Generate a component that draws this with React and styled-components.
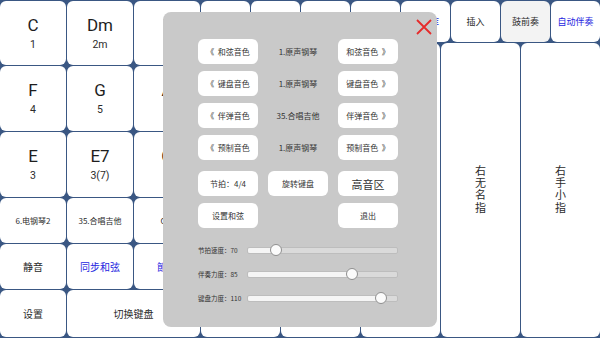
import React from "react";
import styled, { createGlobalStyle } from "styled-components";

const Global = createGlobalStyle`
  html, body { margin: 0; padding: 0; background: #ffffff; }
  body { font-family: Roboto, "Noto Sans CJK SC", sans-serif; overflow: hidden; }
`;

const Board = styled.div`
  position: relative;
  width: 600px;
  height: 338px;
  box-sizing: border-box;
  padding: 1px 0 1px 0;
  display: grid;
  grid-template-columns: 200px 1fr;
  gap: 1px;
  background: #3a5783;
`;

const LeftGrid = styled.div`
  display: grid;
  grid-template-columns: repeat(3, 66px);
  grid-template-rows: 64px 65px 65px 45px 45px 1fr;
  gap: 1px;
`;

const RightArea = styled.div`
  display: grid;
  grid-template-rows: 41px 1fr;
  gap: 1px;
`;

const TopRow = styled.div`
  display: grid;
  grid-template-columns: repeat(8, 1fr);
  gap: 1px;
`;

const FingerRow = styled.div`
  display: grid;
  grid-template-columns: repeat(5, 1fr);
  gap: 1px;
`;

const Cell = styled.div`
  background: ${(p) => p.$bg || "#ffffff"};
  color: ${(p) => p.$color || "#2b2b2b"};
  border-radius: 6px;
  display: flex;
  flex-direction: column;
  align-items: center;
  justify-content: center;
  font-family: "Noto Sans CJK SC", sans-serif;
  font-size: ${(p) => p.$size || 10}px;
  grid-column: span ${(p) => p.$span || 1};
  min-width: 0;
  overflow: hidden;
  white-space: nowrap;
`;

const ChordName = styled.div`
  font-family: Roboto, "Noto Sans CJK SC", sans-serif;
  font-size: 17px;
  line-height: 20px;
  color: #1e1e1e;
`;

const ChordDegree = styled.div`
  font-family: Roboto, sans-serif;
  font-size: 10.5px;
  line-height: 14px;
  margin-top: 3px;
  color: #2b2b2b;
`;

const VerticalLabel = styled.div`
  writing-mode: vertical-rl;
  font-family: "Noto Sans CJK SC", sans-serif;
  font-size: 11px;
  letter-spacing: 1.3px;
  color: #2b2b2b;
`;

const Dialog = styled.div`
  position: absolute;
  left: 163px;
  top: 12px;
  width: 274px;
  height: 315px;
  box-sizing: border-box;
  background: #c9c9c9;
  border-radius: 8px;
  padding: 27px 0 0 35px;
  display: flex;
  flex-direction: column;
`;

const CloseButton = styled.div`
  position: absolute;
  right: 4px;
  top: 6px;
  width: 18px;
  height: 18px;
`;

const ButtonGrid = styled.div`
  display: grid;
  grid-template-columns: repeat(3, 60px);
  grid-auto-rows: 25px;
  column-gap: 10px;
  row-gap: 7px;
  margin-top: ${(p) => p.$offset || 0}px;
`;

const PanelButton = styled.div`
  background: #ffffff;
  border-radius: 6px;
  display: flex;
  align-items: center;
  justify-content: center;
  font-family: "Noto Sans CJK SC", sans-serif;
  font-size: ${(p) => p.$size || 8}px;
  color: #333333;
  white-space: nowrap;
  grid-column: ${(p) => p.$col || "auto"};
`;

const PanelLabel = styled.div`
  display: flex;
  align-items: center;
  justify-content: center;
  font-family: "Noto Sans CJK SC", sans-serif;
  font-size: 8px;
  color: #333333;
  white-space: nowrap;
`;

const Sliders = styled.div`
  margin-top: 17px;
  display: flex;
  flex-direction: column;
  gap: 14px;
`;

const SliderRow = styled.div`
  display: flex;
  align-items: center;
  height: 10px;
`;

const SliderLabel = styled.div`
  width: 49px;
  flex-shrink: 0;
  font-family: "Noto Sans CJK SC", sans-serif;
  font-size: 6.5px;
  color: #333333;
  white-space: nowrap;
`;

const Track = styled.div`
  position: relative;
  width: 151px;
  flex-shrink: 0;
  height: 7px;
  box-sizing: border-box;
  background: #dadada;
  border: 1px solid #bdbdbd;
  border-radius: 2px;
`;

const Fill = styled.div`
  height: 100%;
  background: #f5f5f5;
  border-radius: 2px 0 0 2px;
`;

const Thumb = styled.div`
  position: absolute;
  top: 50%;
  width: 12px;
  height: 12px;
  margin-left: -6px;
  margin-top: -6px;
  box-sizing: border-box;
  border-radius: 50%;
  background: #fbfbfb;
  border: 1px solid #8f8f8f;
`;

const leftCells = [
  { name: "C", deg: "1" },
  { name: "Dm", deg: "2m" },
  { name: "E", deg: "3" },
  { name: "F", deg: "4" },
  { name: "G", deg: "5" },
  { name: "A", deg: "6" },
  { name: "E", deg: "3" },
  { name: "E7", deg: "3(7)" },
  { name: "G", deg: "5" },
];

const topCells = [
  { t: "" },
  { t: "" },
  { t: "" },
  { t: "" },
  { t: "和弦库", color: "#2626e0" },
  { t: "插入" },
  { t: "鼓前奏", bg: "#f3f3f3" },
  { t: "自动伴奏", color: "#2626e0" },
];

const fingers = ["右拇指", "右食指", "右中指", "右无名指", "右手小指"];

const sliders = [
  { label: "节拍速度：70", pct: 18.5 },
  { label: "伴奏力度：85", pct: 70 },
  { label: "键盘力度：110", pct: 89 },
];

const voices = [
  { name: "和弦音色", value: "1.原声钢琴" },
  { name: "键盘音色", value: "1.原声钢琴" },
  { name: "伴弹音色", value: "35.合唱吉他" },
  { name: "预制音色", value: "1.原声钢琴" },
];

function Slider({ label, pct }) {
  return (
    <SliderRow>
      <SliderLabel>{label}</SliderLabel>
      <Track>
        <Fill style={{ width: `${pct}%` }} />
        <Thumb style={{ left: `${pct}%` }} />
      </Track>
    </SliderRow>
  );
}

export default function App() {
  return (
    <>
      <Global />
      <Board>
        <LeftGrid>
          {leftCells.map((c, i) => (
            <Cell key={i}>
              <ChordName>{c.name}</ChordName>
              <ChordDegree>{c.deg}</ChordDegree>
            </Cell>
          ))}
          <Cell $size={8}>6.电钢琴2</Cell>
          <Cell $size={8}>35.合唱吉他</Cell>
          <Cell $size={8}>C调</Cell>
          <Cell>静音</Cell>
          <Cell $color="#2626e0">同步和弦</Cell>
          <Cell $color="#2626e0">節奏</Cell>
          <Cell>设置</Cell>
          <Cell $span={2}>切换键盘</Cell>
        </LeftGrid>
        <RightArea>
          <TopRow>
            {topCells.map((c, i) => (
              <Cell key={i} $size={9} $bg={c.bg} $color={c.color}>
                {c.t}
              </Cell>
            ))}
          </TopRow>
          <FingerRow>
            {fingers.map((f) => (
              <Cell key={f}>
                <VerticalLabel>{f}</VerticalLabel>
              </Cell>
            ))}
          </FingerRow>
        </RightArea>

        <Dialog>
          <CloseButton>
            <svg width="18" height="18" viewBox="0 0 18 18">
              <path d="M2 2 L16 16 M16 2 L2 16" stroke="#e62b2b" strokeWidth="1.8" fill="none" />
            </svg>
          </CloseButton>
          <ButtonGrid>
            {voices.map((v) => (
              <React.Fragment key={v.name}>
                <PanelButton>《&nbsp;&nbsp;{v.name}</PanelButton>
                <PanelLabel>{v.value}</PanelLabel>
                <PanelButton>{v.name}&nbsp;&nbsp;》</PanelButton>
              </React.Fragment>
            ))}
          </ButtonGrid>
          <ButtonGrid $offset={11}>
            <PanelButton>节拍：4/4</PanelButton>
            <PanelButton>旋转键盘</PanelButton>
            <PanelButton $size={11}>高音区</PanelButton>
            <PanelButton>设置和弦</PanelButton>
            <PanelButton $col="3">退出</PanelButton>
          </ButtonGrid>
          <Sliders>
            {sliders.map((s) => (
              <Slider key={s.label} label={s.label} pct={s.pct} />
            ))}
          </Sliders>
        </Dialog>
      </Board>
    </>
  );
}
